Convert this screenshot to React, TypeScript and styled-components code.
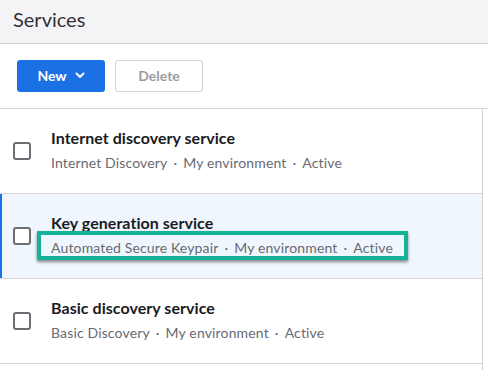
import React from 'react';
import styled, { createGlobalStyle } from 'styled-components';

const GlobalStyle = createGlobalStyle`
  html, body {
    margin: 0;
    padding: 0;
    background: #ffffff;
    font-family: Lato, "Open Sans", sans-serif;
  }
  * {
    box-sizing: border-box;
  }
`;

interface Service {
  name: string;
  type: string;
  env: string;
  status: string;
  selected?: boolean;
  highlighted?: boolean;
}

const services: Service[] = [
  { name: 'Internet discovery service', type: 'Internet Discovery', env: 'My environment', status: 'Active' },
  {
    name: 'Key generation service',
    type: 'Automated Secure Keypair',
    env: 'My environment',
    status: 'Active',
    selected: true,
    highlighted: true,
  },
  { name: 'Basic discovery service', type: 'Basic Discovery', env: 'My environment', status: 'Active' },
];

const ChevronDown = () => (
  <svg width="10" height="7" viewBox="0 0 10 7" fill="none">
    <path d="M1.5 1.5 L5 5 L8.5 1.5" stroke="#ffffff" strokeWidth="2" strokeLinecap="round" strokeLinejoin="round" />
  </svg>
);

const App: React.FC = () => {
  return (
    <Page>
      <GlobalStyle />
      <Header>
        <Title>Services</Title>
      </Header>
      <Toolbar>
        <PrimaryButton>
          New
          <ChevronDown />
        </PrimaryButton>
        <SecondaryButton disabled>Delete</SecondaryButton>
      </Toolbar>
      <List>
        {services.map((s) => (
          <Row key={s.name} selected={s.selected}>
            <Checkbox />
            <RowText>
              <RowTitle>{s.name}</RowTitle>
              <Meta highlighted={s.highlighted}>
                {s.type}
                <Dot>·</Dot>
                {s.env}
                <Dot>·</Dot>
                {s.status}
              </Meta>
            </RowText>
          </Row>
        ))}
      </List>
    </Page>
  );
};

export default App;

const Page = styled.div`
  display: flex;
  flex-direction: column;
  width: 488px;
  height: 100vh;
  overflow: hidden;
`;

const Header = styled.div`
  height: 44px;
  padding: 7px 13px 0;
  background: #f4f4f6;
  border-bottom: 1px solid #d3d3d7;
`;

const Title = styled.h1`
  margin: 0;
  font-size: 20px;
  line-height: 24px;
  font-weight: 400;
  color: #333338;
`;

const Toolbar = styled.div`
  display: flex;
  align-items: center;
  gap: 10px;
  height: 65px;
  padding: 0 17px 1px;
  border-bottom: 1px solid #d3d3d7;
`;

const BaseButton = styled.button`
  display: inline-flex;
  align-items: center;
  justify-content: center;
  gap: 8px;
  width: 88px;
  height: 32px;
  border-radius: 3px;
  font-family: Lato, sans-serif;
  font-size: 14px;
  font-weight: 700;
  padding: 0;
`;

const PrimaryButton = styled(BaseButton)`
  background: #1b71e4;
  border: none;
  color: #ffffff;
`;

const SecondaryButton = styled(BaseButton)`
  background: #ffffff;
  border: 1px solid #d2d2d6;
  color: #9c9ca2;
`;

const List = styled.div`
  flex: 1;
  width: 483px;
  border-right: 1px solid #d3d3d7;
`;

const Row = styled.div<{ selected?: boolean }>`
  display: flex;
  align-items: center;
  gap: 20px;
  height: 85px;
  padding: 0 13px;
  border-bottom: 1px solid #d3d3d7;
  background: ${({ selected }) => (selected ? '#eff6fe' : '#ffffff')};
  box-shadow: ${({ selected }) => (selected ? 'inset 2px 0 0 #1b71e4' : 'none')};
`;

const Checkbox = styled.span`
  flex: none;
  width: 18px;
  height: 18px;
  border: 2px solid #6d6e75;
  border-radius: 3px;
  background: #ffffff;
  margin-top: -1px;
`;

const RowText = styled.div`
  display: flex;
  flex-direction: column;
  align-items: flex-start;
  gap: 5px;
  margin-top: -1px;
`;

const RowTitle = styled.div`
  font-size: 16px;
  line-height: 20px;
  font-weight: 700;
  letter-spacing: 0.05px;
  color: #1b1b1f;
`;

const Meta = styled.div<{ highlighted?: boolean }>`
  position: relative;
  display: inline-block;
  font-size: 14px;
  line-height: 20px;
  letter-spacing: 0.15px;
  color: #686a72;

  &::after {
    content: '';
    display: ${({ highlighted }) => (highlighted ? 'block' : 'none')};
    position: absolute;
    left: -14px;
    right: -15px;
    top: -7px;
    bottom: -2px;
    border: 4px solid #16b197;
    box-shadow: 0 2px 3px rgba(0, 0, 0, 0.45);
  }
`;

const Dot = styled.span`
  margin: 0 6px;
`;
